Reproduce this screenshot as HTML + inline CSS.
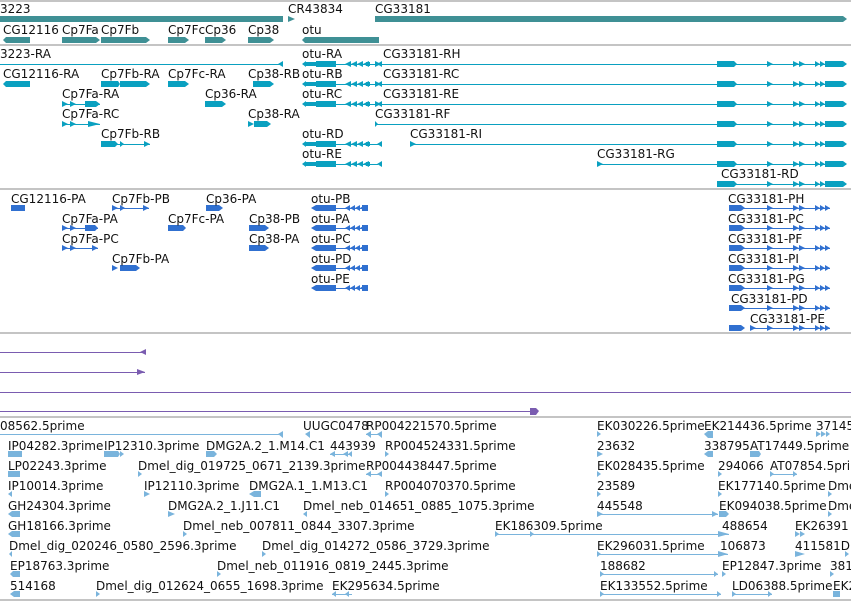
<!DOCTYPE html>
<html><head><meta charset="utf-8"><style>
html,body{margin:0;padding:0;background:#fff;width:851px;height:601px;overflow:hidden}
svg{display:block}
text{font-family:"DejaVu Sans","Liberation Sans",sans-serif;font-size:12px;fill:#111}
</style></head><body>
<svg width="851" height="601" viewBox="0 0 851 601" xmlns="http://www.w3.org/2000/svg">
<defs>
<!-- CG33181 transcript exons (relative y=0 center) -->
<g id="cgX" fill="#0aa0c0">
<rect x="717" y="-3" width="13" height="6"/><polygon points="730,-3 734,-3 737,0 734,3 730,3"/>
<polygon points="730,-3 736,0 730,3"/>
<polygon points="767,-3 773,0 767,3"/>
<polygon points="793,-3 799,0 793,3"/><polygon points="799,-3 805,0 799,3"/>
<polygon points="815,-3 820,0 815,3"/><polygon points="820,-3 825,0 820,3"/>
<rect x="825" y="-3" width="18" height="6"/><polygon points="843,-3 847,0 843,3"/>
</g>
<g id="otuX" fill="#0aa0c0">
<polygon points="302,0 306,-3 306,3"/><rect x="306" y="-2" width="10" height="4"/><rect x="316" y="-3" width="20" height="6"/>
<polygon points="345,0 351,-3 351,3"/><polygon points="351,0 357,-3 357,3"/><polygon points="357,0 363,-3 363,3"/><polygon points="363,0 369,-3 369,3"/><rect x="366" y="-2" width="4" height="4"/>
<polygon points="377,0 382,-3 382,3"/>
</g>
<g id="cgP" fill="#3070d0">
<polygon points="729,-3 741,-3 745,0 741,3 729,3"/><polygon points="767,-3 773,0 767,3"/>
<polygon points="793,-3 799,0 793,3"/><polygon points="799,-3 805,0 799,3"/>
<polygon points="815,-3 820,0 815,3"/><polygon points="820,-3 825,0 820,3"/><polygon points="825,-3 830,0 825,3"/>
</g>
<g id="otuP" fill="#3070d0">
<polygon points="311,0 316,-3 316,3"/><rect x="316" y="-3" width="20" height="6"/>
<polygon points="345,0 350,-3 350,3"/><polygon points="350,0 355,-3 355,3"/><polygon points="355,0 360,-3 360,3"/><polygon points="360,0 365,-3 365,3"/><rect x="362" y="-3" width="6" height="6"/>
</g>
</defs>
<!-- separators -->
<g fill="#c4c4c4">
<rect x="0" y="0" width="851" height="2"/><rect x="0" y="44" width="851" height="2"/><rect x="0" y="188" width="851" height="2"/>
<rect x="0" y="332" width="851" height="2"/><rect x="0" y="416" width="851" height="2"/><rect x="0" y="599" width="851" height="2"/>
</g>
<!-- genes -->
<g fill="#3f9095">
<rect x="0" y="16" width="283" height="6"/><polygon points="288,16 295,19 288,22"/>
<rect x="375" y="16" width="468" height="6"/><polygon points="843,16 847,19 843,22"/>
<polygon points="3,40 6,37 30,37 30,43 6,43"/><polygon points="62,37 96,37 100,40 96,43 62,43"/><polygon points="101,37 146,37 150,40 146,43 101,43"/>
<polygon points="168,37 185,37 189,40 185,43 168,43"/><polygon points="205,37 222,37 226,40 222,43 205,43"/><polygon points="248,37 270,37 274,40 270,43 248,43"/>
<polygon points="302,40 305,37 379,37 379,43 305,43"/>
</g>
<text x="0" y="13">3223</text><text x="288" y="13">CR43834</text><text x="375" y="13">CG33181</text>
<text x="3" y="34">CG12116</text><text x="62" y="34">Cp7Fa</text><text x="101" y="34">Cp7Fb</text><text x="168" y="34">Cp7Fc</text><text x="205" y="34">Cp36</text><text x="248" y="34">Cp38</text><text x="302" y="34">otu</text>
<!-- transcripts -->
<g stroke="#0aa0c0" stroke-width="1">
<line x1="0" y1="64.5" x2="283" y2="64.5"/>
<line x1="375" y1="64.5" x2="846" y2="64.5"/><line x1="375" y1="84.5" x2="825" y2="84.5"/><line x1="375" y1="104.5" x2="825" y2="104.5"/>
<line x1="375" y1="124.5" x2="846" y2="124.5"/><line x1="410" y1="144.5" x2="846" y2="144.5"/><line x1="597" y1="164.5" x2="846" y2="164.5"/><line x1="721" y1="184.5" x2="846" y2="184.5"/>
<line x1="306" y1="64.5" x2="382" y2="64.5"/><line x1="306" y1="84.5" x2="382" y2="84.5"/><line x1="306" y1="104.5" x2="382" y2="104.5"/><line x1="306" y1="144.5" x2="382" y2="144.5"/><line x1="306" y1="164.5" x2="378" y2="164.5"/>
<line x1="62" y1="104.5" x2="100" y2="104.5"/><line x1="62" y1="124.5" x2="100" y2="124.5"/><line x1="101" y1="144.5" x2="150" y2="144.5"/>
</g>
<g fill="#0aa0c0">
<polygon points="278,64 283,61 283,67"/>
<polygon points="375,61 381,64 375,67"/><polygon points="375,81 381,84 375,87"/><polygon points="375,101 381,104 375,107"/><polygon points="375,121 378,124 375,127"/><polygon points="410,141 416,144 410,147"/><polygon points="597,161 603,164 597,167"/>
<polygon points="3,84 6,81 30,81 30,87 6,87"/>
<polygon points="101,81 118,81 120,84 118,87 101,87"/><polygon points="120,81 146,81 150,84 146,87 120,87"/>
<polygon points="168,81 185,81 189,84 185,87 168,87"/><polygon points="253,81 270,81 274,84 270,87 253,87"/>
<polygon points="62,101 68,104 62,107"/><polygon points="70,101 76,104 70,107"/><rect x="85" y="101" width="11" height="6"/><polygon points="96,101 100,104 96,107"/>
<polygon points="205,101 222,101 226,104 222,107 205,107"/>
<polygon points="62,121 68,124 62,127"/><polygon points="70,121 76,124 70,127"/><polygon points="88,121 100,124 88,127"/>
<polygon points="248,121 254,124 248,127"/><polygon points="254,121 267,121 271,124 267,127 254,127"/>
<polygon points="101,141 115,141 118,144 115,147 101,147"/><polygon points="120,141 124,144 120,147"/><polygon points="144,141 150,144 144,147"/>
<rect x="721" y="181" width="9" height="6"/>
</g>
<use href="#otuX" y="64"/><use href="#otuX" y="84"/><use href="#otuX" y="104"/><use href="#otuX" y="144"/><use href="#otuX" y="164"/>
<use href="#cgX" y="64"/><use href="#cgX" y="84"/><use href="#cgX" y="104"/><use href="#cgX" y="124"/><use href="#cgX" y="144"/><use href="#cgX" y="164"/><use href="#cgX" y="184"/>
<text x="0" y="58">3223-RA</text><text x="302" y="58">otu-RA</text><text x="383" y="58">CG33181-RH</text>
<text x="3" y="78">CG12116-RA</text><text x="101" y="78">Cp7Fb-RA</text><text x="168" y="78">Cp7Fc-RA</text><text x="248" y="78">Cp38-RB</text><text x="302" y="78">otu-RB</text><text x="383" y="78">CG33181-RC</text>
<text x="62" y="98">Cp7Fa-RA</text><text x="205" y="98">Cp36-RA</text><text x="302" y="98">otu-RC</text><text x="383" y="98">CG33181-RE</text>
<text x="62" y="118">Cp7Fa-RC</text><text x="248" y="118">Cp38-RA</text><text x="375" y="118">CG33181-RF</text>
<text x="101" y="138">Cp7Fb-RB</text><text x="302" y="138">otu-RD</text><text x="410" y="138">CG33181-RI</text>
<text x="302" y="158">otu-RE</text><text x="597" y="158">CG33181-RG</text>
<text x="721" y="178">CG33181-RD</text>
<!-- proteins -->
<g stroke="#3070d0" stroke-width="1">
<line x1="316" y1="208.5" x2="368" y2="208.5"/><line x1="316" y1="228.5" x2="368" y2="228.5"/><line x1="316" y1="248.5" x2="368" y2="248.5"/><line x1="316" y1="268.5" x2="368" y2="268.5"/><line x1="316" y1="288.5" x2="368" y2="288.5"/>
<line x1="729" y1="208.5" x2="830" y2="208.5"/><line x1="729" y1="228.5" x2="830" y2="228.5"/><line x1="729" y1="248.5" x2="830" y2="248.5"/><line x1="729" y1="268.5" x2="830" y2="268.5"/><line x1="729" y1="288.5" x2="830" y2="288.5"/><line x1="732" y1="308.5" x2="830" y2="308.5"/><line x1="750" y1="328.5" x2="830" y2="328.5"/>
<line x1="112" y1="208.5" x2="149" y2="208.5"/><line x1="62" y1="228.5" x2="98" y2="228.5"/><line x1="62" y1="248.5" x2="98" y2="248.5"/>
</g>
<g fill="#3070d0">
<rect x="11" y="205" width="14" height="6"/>
<polygon points="112,205 118,208 112,211"/><polygon points="120,205 125,208 120,211"/><polygon points="143,205 149,208 143,211"/>
<polygon points="206,205 219,205 223,208 219,211 206,211"/>
<polygon points="62,225 68,228 62,231"/><polygon points="70,225 76,228 70,231"/><polygon points="85,225 95,225 98,228 95,231 85,231"/>
<polygon points="168,225 183,225 186,228 183,231 168,231"/><polygon points="249,225 265,225 269,228 265,231 249,231"/>
<polygon points="62,245 68,248 62,251"/><polygon points="70,245 76,248 70,251"/><polygon points="92,245 98,248 92,251"/>
<polygon points="249,245 265,245 269,248 265,251 249,251"/>
<polygon points="112,265 118,268 112,271"/><polygon points="120,265 136,265 140,268 136,271 120,271"/>
<polygon points="732,305 736,308 732,311"/><rect x="732" y="305" width="9" height="6"/>
<polygon points="750,325 756,328 750,331"/>
</g>
<use href="#otuP" y="208"/><use href="#otuP" y="228"/><use href="#otuP" y="248"/><use href="#otuP" y="268"/><use href="#otuP" y="288"/>
<use href="#cgP" y="208"/><use href="#cgP" y="228"/><use href="#cgP" y="248"/><use href="#cgP" y="268"/><use href="#cgP" y="288"/><use href="#cgP" y="308"/><use href="#cgP" y="328"/>
<text x="11" y="203">CG12116-PA</text><text x="112" y="203">Cp7Fb-PB</text><text x="206" y="203">Cp36-PA</text><text x="311" y="203">otu-PB</text><text x="728" y="203">CG33181-PH</text>
<text x="62" y="223">Cp7Fa-PA</text><text x="168" y="223">Cp7Fc-PA</text><text x="249" y="223">Cp38-PB</text><text x="311" y="223">otu-PA</text><text x="728" y="223">CG33181-PC</text>
<text x="62" y="243">Cp7Fa-PC</text><text x="249" y="243">Cp38-PA</text><text x="311" y="243">otu-PC</text><text x="728" y="243">CG33181-PF</text>
<text x="112" y="263">Cp7Fb-PA</text><text x="311" y="263">otu-PD</text><text x="728" y="263">CG33181-PI</text>
<text x="311" y="283">otu-PE</text><text x="728" y="283">CG33181-PG</text>
<text x="731" y="303">CG33181-PD</text><text x="750" y="323">CG33181-PE</text>
<!-- purple -->
<g stroke="#7a5cb0" stroke-width="1">
<line x1="0" y1="352.5" x2="146" y2="352.5"/><line x1="0" y1="372.5" x2="145" y2="372.5"/><line x1="0" y1="392.5" x2="851" y2="392.5"/><line x1="0" y1="411.5" x2="537" y2="411.5"/>
</g>
<g fill="#7a5cb0">
<polygon points="140,352 146,349 146,355"/><polygon points="137,369 145,372 137,375"/><polygon points="530,408 536,408 539,411 536,415 530,415"/>
</g>
<!-- ESTs -->
<g stroke="#7ab4dc" stroke-width="1">
<line x1="0" y1="434.5" x2="283" y2="434.5"/><line x1="366" y1="434.5" x2="382" y2="434.5"/>
<line x1="330" y1="454.5" x2="352" y2="454.5"/><line x1="366" y1="474.5" x2="382" y2="474.5"/>
<line x1="770" y1="474.5" x2="797" y2="474.5"/>
<line x1="597" y1="514.5" x2="718" y2="514.5"/><line x1="495" y1="534.5" x2="729" y2="534.5"/>
<line x1="597" y1="554.5" x2="728" y2="554.5"/><line x1="600" y1="574.5" x2="718" y2="574.5"/>
<line x1="332" y1="594.5" x2="352" y2="594.5"/><line x1="600" y1="594.5" x2="721" y2="594.5"/><line x1="732" y1="594.5" x2="772" y2="594.5"/>
</g>
<g fill="#7ab4dc">
<polygon points="278,434 283,431 283,438"/><polygon points="305,434 310,431 310,438"/><polygon points="366,434 371,431 371,438"/><polygon points="377,434 382,431 382,438"/>
<polygon points="597,431 601,434 597,437"/><polygon points="704,434 708,431 713,431 713,438 708,438"/><polygon points="816,431 821,434 816,437"/><polygon points="821,431 826,434 821,437"/><polygon points="826,431 830,434 826,437"/>
<rect x="8" y="451" width="14" height="6"/><polygon points="104,451 118,451 120,454 118,457 104,457"/><polygon points="120,451 124,454 120,457"/><polygon points="206,451 214,451 217,454 214,457 206,457"/>
<polygon points="330,454 335,451 335,457"/><polygon points="343,454 348,451 348,457"/><polygon points="348,454 352,451 352,457"/><polygon points="385,451 389,454 385,457"/>
<polygon points="597,451 603,454 597,457"/><polygon points="704,454 708,451 713,451 713,457 708,457"/><polygon points="750,451 759,451 761,454 759,457 750,457"/>
<rect x="8" y="471" width="12" height="6"/><polygon points="138,471 142,474 138,477"/><polygon points="366,474 371,471 371,477"/><polygon points="377,474 382,471 382,477"/>
<polygon points="597,471 601,474 597,477"/><polygon points="718,471 722,474 718,477"/><polygon points="770,471 774,474 770,477"/><polygon points="793,471 797,474 793,477"/>
<polygon points="8,494 12,491 12,497"/><polygon points="144,491 150,494 144,497"/><polygon points="249,494 254,491 261,491 261,497 254,497"/><polygon points="385,491 389,494 385,497"/>
<polygon points="597,491 601,494 597,497"/><polygon points="718,491 722,494 718,497"/><polygon points="828,491 832,494 828,497"/>
<polygon points="8,514 12,511 20,511 20,517 12,517"/><polygon points="168,511 175,514 168,517"/><polygon points="303,514 307,511 307,517"/>
<polygon points="597,511 603,514 597,517"/><polygon points="712,511 718,514 712,517"/><polygon points="719,511 726,511 729,514 726,517 719,517"/><polygon points="828,511 832,514 828,517"/>
<polygon points="8,534 12,531 20,531 20,537 12,537"/><polygon points="183,531 187,534 183,537"/><polygon points="495,531 499,534 495,537"/><polygon points="530,531 534,534 530,537"/><polygon points="718,531 729,534 718,537"/><polygon points="795,531 800,534 795,537"/><polygon points="800,531 805,534 800,537"/>
<polygon points="9,554 12,551 12,557"/><polygon points="262,551 266,554 262,557"/><polygon points="597,551 601,554 597,557"/><polygon points="718,551 728,554 718,557"/><polygon points="795,551 805,554 795,557"/><polygon points="845,551 849,554 845,557"/>
<polygon points="10,574 13,571 20,571 20,577 13,577"/><polygon points="217,571 221,574 217,577"/><polygon points="600,571 604,574 600,577"/><polygon points="714,571 718,574 714,577"/><polygon points="722,571 726,574 722,577"/><polygon points="830,571 834,574 830,577"/>
<polygon points="10,594 14,591 20,591 20,597 14,597"/><polygon points="96,591 100,594 96,597"/><polygon points="332,594 336,591 336,597"/><polygon points="345,594 349,591 349,597"/>
<polygon points="600,591 604,594 600,597"/><polygon points="717,591 721,594 717,597"/><polygon points="732,591 736,594 732,597"/><polygon points="768,591 772,594 768,597"/><polygon points="833,591 840,591 840,597 833,597"/>
</g>
<text x="0" y="430">08562.5prime</text><text x="303" y="430">UUGC0478</text><text x="366" y="430">RP004221570.5prime</text><text x="597" y="430">EK030226.5prime</text><text x="704" y="430">EK214436.5prime</text><text x="816" y="430">37145</text>
<text x="8" y="450">IP04282.3prime</text><text x="104" y="450">IP12310.3prime</text><text x="206" y="450">DMG2A.2_1.M14.C1</text><text x="330" y="450">443939</text><text x="385" y="450">RP004524331.5prime</text><text x="597" y="450">23632</text><text x="704" y="450">338795</text><text x="750" y="450">AT17449.5prime</text>
<text x="8" y="470">LP02243.3prime</text><text x="138" y="470">Dmel_dig_019725_0671_2139.3prime</text><text x="366" y="470">RP004438447.5prime</text><text x="597" y="470">EK028435.5prime</text><text x="718" y="470">294066</text><text x="770" y="470">AT07854.5prime</text>
<text x="8" y="490">IP10014.3prime</text><text x="144" y="490">IP12110.3prime</text><text x="249" y="490">DMG2A.1_1.M13.C1</text><text x="385" y="490">RP004070370.5prime</text><text x="597" y="490">23589</text><text x="718" y="490">EK177140.5prime</text><text x="828" y="490">Dme</text>
<text x="8" y="510">GH24304.3prime</text><text x="168" y="510">DMG2A.2_1.J11.C1</text><text x="303" y="510">Dmel_neb_014651_0885_1075.3prime</text><text x="597" y="510">445548</text><text x="719" y="510">EK094038.5prime</text><text x="828" y="510">Dme</text>
<text x="8" y="530">GH18166.3prime</text><text x="183" y="530">Dmel_neb_007811_0844_3307.3prime</text><text x="495" y="530">EK186309.5prime</text><text x="722" y="530">488654</text><text x="795" y="530">EK26391</text>
<text x="9" y="550">Dmel_dig_020246_0580_2596.3prime</text><text x="262" y="550">Dmel_dig_014272_0586_3729.3prime</text><text x="597" y="550">EK296031.5prime</text><text x="720" y="550">106873</text><text x="795" y="550">411581D</text>
<text x="10" y="570">EP18763.3prime</text><text x="217" y="570">Dmel_neb_011916_0819_2445.3prime</text><text x="600" y="570">188682</text><text x="722" y="570">EP12847.3prime</text><text x="830" y="570">381</text>
<text x="10" y="590">514168</text><text x="96" y="590">Dmel_dig_012624_0655_1698.3prime</text><text x="332" y="590">EK295634.5prime</text><text x="600" y="590">EK133552.5prime</text><text x="732" y="590">LD06388.5prime</text><text x="833" y="590">EK2</text>
</svg>
</body></html>
